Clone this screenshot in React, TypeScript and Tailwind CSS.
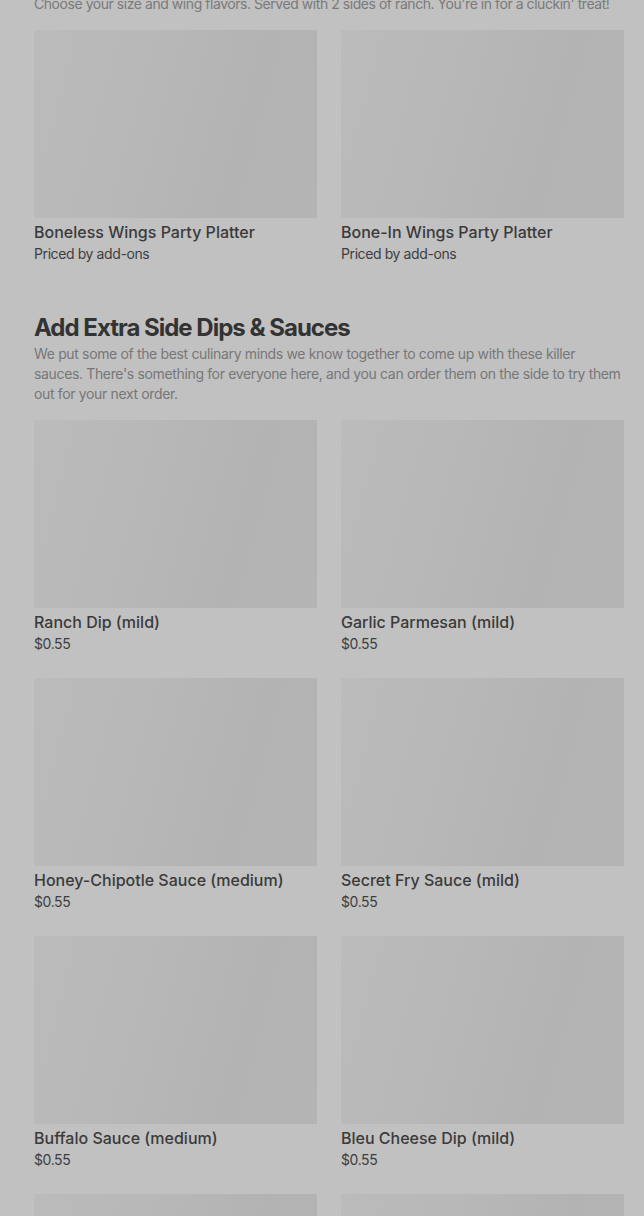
import React from "react";

type Item = { name: string; price: string };

const platters: Item[] = [
  { name: "Boneless Wings Party Platter", price: "Priced by add-ons" },
  { name: "Bone-In Wings Party Platter", price: "Priced by add-ons" },
];

const sauces: Item[] = [
  { name: "Ranch Dip (mild)", price: "$0.55" },
  { name: "Garlic Parmesan (mild)", price: "$0.55" },
  { name: "Honey-Chipotle Sauce (medium)", price: "$0.55" },
  { name: "Secret Fry Sauce (mild)", price: "$0.55" },
  { name: "Buffalo Sauce (medium)", price: "$0.55" },
  { name: "Bleu Cheese Dip (mild)", price: "$0.55" },
  { name: "Sweet Chili Sauce (medium)", price: "$0.55" },
  { name: "Honey Mustard Dip (mild)", price: "$0.55" },
];

function Card({ item }: { item: Item }) {
  return (
    <div className="flex flex-col pb-6">
      <div className="h-[188px] w-full bg-[linear-gradient(105deg,#bbbbbb_0%,#b8b8b8_35%,#b3b3b3_70%,#b4b4b4_100%)]" />
      <div className="mt-[2px] text-[16px] leading-6 font-medium text-[#3a3a3a]">{item.name}</div>
      <div className="text-[14px] leading-5 tracking-[-0.4px] text-[#3e3e3e]">{item.price}</div>
    </div>
  );
}

export default function App() {
  return (
    <div className="min-h-screen bg-[#c1c1c1] pl-[34px] pr-[20px] font-['Inter',sans-serif] overflow-hidden">
      <p className="-mt-[6px] text-[14px] leading-5 tracking-[-0.45px] text-[#7a7a7a] whitespace-nowrap">
        Choose your size and wing flavors. Served with 2 sides of ranch. You're in for a cluckin' treat!
      </p>

      <div className="mt-4 grid grid-cols-2 gap-x-6">
        {platters.map((p) => (
          <Card key={p.name} item={p} />
        ))}
      </div>

      <section className="mt-6">
        <h2 className="text-[24px] leading-8 font-bold tracking-[-1px] text-[#333333]">
          Add Extra Side Dips &amp; Sauces
        </h2>
        <p className="text-[14px] leading-5 tracking-[-0.35px] text-[#777777]">
          We put some of the best culinary minds we know together to come up with these killer sauces. There's
          something for everyone here, and you can order them on the side to try them out for your next order.
        </p>
        <div className="mt-4 grid grid-cols-2 gap-x-6">
          {sauces.map((s) => (
            <Card key={s.name} item={s} />
          ))}
        </div>
      </section>
    </div>
  );
}
